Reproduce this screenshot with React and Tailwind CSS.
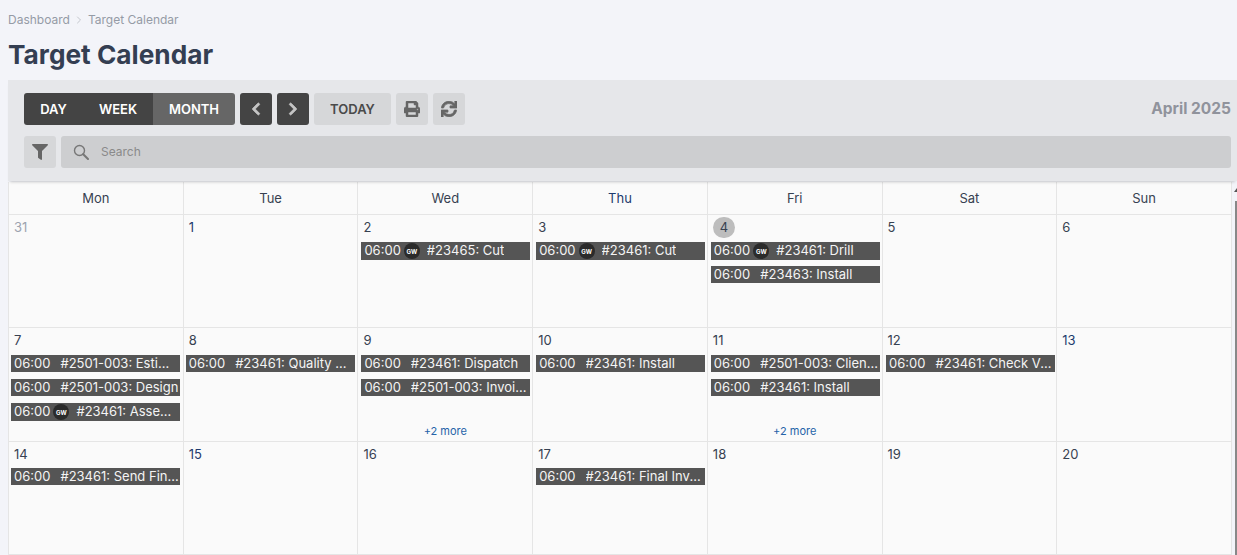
import React from "react";
import { FaPrint, FaSync, FaFilter, FaChevronLeft, FaChevronRight } from "react-icons/fa";
import { ChevronRight } from "lucide-react";

const days = ["Mon", "Tue", "Wed", "Thu", "Fri", "Sat", "Sun"];

const barOffsets = ["ml-[2px]", "ml-[2px]", "ml-[3px]", "ml-[3px]", "ml-[3px]", "ml-[3.5px]", "ml-[3.5px]"];

const weeks = [
  [
    { d: "31", muted: true },
    { d: "1", link: true },
    { d: "2", ev: [{ gw: true, t: "#23465: Cut" }] },
    { d: "3", ev: [{ gw: true, t: "#23461: Cut" }] },
    { d: "4", today: true, ev: [{ gw: true, t: "#23461: Drill" }, { t: "#23463: Install" }] },
    { d: "5" },
    { d: "6" },
  ],
  [
    { d: "7", ev: [{ t: "#2501-003: Estimate" }, { t: "#2501-003: Design" }, { gw: true, t: "#23461: Assembly" }] },
    { d: "8", ev: [{ t: "#23461: Quality Check" }] },
    { d: "9", more: true, ev: [{ t: "#23461: Dispatch" }, { t: "#2501-003: Invoicing" }] },
    { d: "10", ev: [{ t: "#23461: Install" }] },
    { d: "11", more: true, ev: [{ t: "#2501-003: Client Review" }, { t: "#23461: Install" }] },
    { d: "12", ev: [{ t: "#23461: Check Values" }] },
    { d: "13", link: true },
  ],
  [
    { d: "14", ev: [{ t: "#23461: Send Final Invoice" }] },
    { d: "15", link: true },
    { d: "16" },
    { d: "17", ev: [{ t: "#23461: Final Invoice" }] },
    { d: "18" },
    { d: "19" },
    { d: "20" },
  ],
];

function Event({ gw, t, offset }) {
  return (
    <div className={`${offset} flex w-[169px] items-center overflow-hidden whitespace-nowrap bg-[#555555] pl-[3px] text-[13px] text-[#f4f4f4] ${gw ? "mb-[6px] h-[18px]" : "mb-[7px] h-[17px]"}`}>
      <span className="shrink-0">06:00</span>
      {gw ? (
        <span className="ml-[3px] mr-[7px] flex h-[16px] w-[16px] shrink-0 items-center justify-center rounded-full bg-[#2b2b2b] text-[6px] font-bold text-white">GW</span>
      ) : (
        <span className="w-[10px] shrink-0" />
      )}
      <span className="min-w-0 truncate">{t}</span>
    </div>
  );
}

function Cell({ c, col, lastRow }) {
  return (
    <div className="relative min-w-0 border-b border-r border-[#e5e5e5] bg-[#fafafa]">
      <div className={`flex items-start pl-[5px] pt-[2px] ${lastRow ? "h-[26px]" : "h-[27px]"}`}>
        <span
          className={`flex h-[21px] items-center text-[13px] ${c.today ? "w-[22px] justify-center rounded-full bg-[#bdbdbd] text-[#374151]" : c.muted ? "text-[#9ca3af]" : c.link ? "text-[#1e3a6e]" : "text-[#374151]"}`}
        >
          {c.d}
        </span>
      </div>
      {(c.ev || []).map((e, i) => (
        <Event key={i} {...e} offset={barOffsets[col]} />
      ))}
      {c.more && (
        <div className="absolute bottom-[3px] left-0 right-0 text-center text-[11px] leading-[14px] text-[#2563a8]">+2 more</div>
      )}
    </div>
  );
}

export default function App() {
  return (
    <div className="relative h-[555px] w-full overflow-hidden bg-[#f3f4f9] font-['Inter',sans-serif]">
      <div className="flex h-[39px] items-center gap-[3px] pl-2 pt-px text-[12px] text-[#959ba6]">
        <span>Dashboard</span>
        <ChevronRight size={12} className="text-[#c4c7cd]" />
        <span>Target Calendar</span>
      </div>
      <h1 className="h-[41px] pl-2 text-[26.25px] font-bold leading-[32px] text-[#343e52]">Target Calendar</h1>

      <div className="relative z-10 ml-2 bg-[#e6e7ea] pb-[13px] pl-4 pr-[6px] pt-[13px] shadow-[0_3px_3px_-2px_rgba(0,0,0,0.2)]">
        <div className="flex items-center gap-[5px]">
          <div className="flex h-8 overflow-hidden rounded-[3px] text-[13px] font-semibold text-white">
            <span className="flex w-[59px] items-center justify-center bg-[#444444] pt-px">DAY</span>
            <span className="flex w-[70px] items-center justify-center bg-[#444444] pt-px">WEEK</span>
            <span className="flex w-[82px] items-center justify-center bg-[#666666] pt-px">MONTH</span>
          </div>
          <button className="flex h-8 w-8 items-center justify-center rounded-[3px] bg-[#444444] text-[#c4c4c4]"><FaChevronLeft size={14} stroke="currentColor" strokeWidth={30} /></button>
          <button className="flex h-8 w-8 items-center justify-center rounded-[3px] bg-[#444444] text-[#c4c4c4]"><FaChevronRight size={14} stroke="currentColor" strokeWidth={30} /></button>
          <button className="flex h-8 w-[77px] items-center justify-center rounded-[3px] bg-[#d6d7d9] pt-px text-[13px] font-semibold text-[#4a4a4a]">TODAY</button>
          <button className="flex h-8 w-8 items-center justify-center rounded-[3px] bg-[#d6d7d9] text-[#666666]"><FaPrint size={16} stroke="currentColor" strokeWidth={16} /></button>
          <button className="flex h-8 w-8 items-center justify-center rounded-[3px] bg-[#d6d7d9] text-[#666666]"><FaSync size={16} stroke="currentColor" strokeWidth={24} /></button>
          <div className="ml-auto text-[15.5px] font-bold text-[#90939c]">April 2025</div>
        </div>
        <div className="mt-[11px] flex gap-[5px]">
          <button className="flex h-8 w-8 shrink-0 items-center justify-center rounded-[3px] bg-[#d6d7d9] text-[#666666]"><FaFilter size={16} /></button>
          <div className="flex h-8 flex-1 items-center rounded-[3px] bg-[#cdced0] pl-[12px] text-[12px] text-[#8a8a8a]">
            <svg width="16" height="16" viewBox="0 0 16 16" fill="none" className="mr-[12px] text-[#777777]">
              <circle cx="6.5" cy="6.5" r="5" stroke="currentColor" strokeWidth="1.4" />
              <path d="M10.2 10.2L15 15" stroke="currentColor" strokeWidth="2" strokeLinecap="round" />
            </svg>
            Search
          </div>
        </div>
      </div>

      <div className="ml-2 mt-px w-[1224px] border-l border-[#e5e5e5]">
        <div className="grid h-[33px] grid-cols-7 bg-[#fafafa]">
          {days.map((d) => (
            <div key={d} className={`flex items-center justify-center border-b border-r border-[#e5e5e5] pt-px text-[13px] ${d === "Thu" ? "text-[#1e3a6e]" : "text-[#374151]"}`}>{d}</div>
          ))}
        </div>
        <div className="grid h-[340px] grid-cols-7 grid-rows-[113px_114px_113px]">
          {weeks.flat().map((c, i) => (
            <Cell key={i} c={c} col={i % 7} lastRow={i >= 14} />
          ))}
        </div>
      </div>

      <div className="absolute right-[-3px] top-[188px] h-0 w-0 border-x-[3px] border-b-[4px] border-x-transparent border-b-[#555555]" />
      <div className="absolute right-0 top-[201px] h-[354px] w-[2px] bg-[#888888]" />
    </div>
  );
}
